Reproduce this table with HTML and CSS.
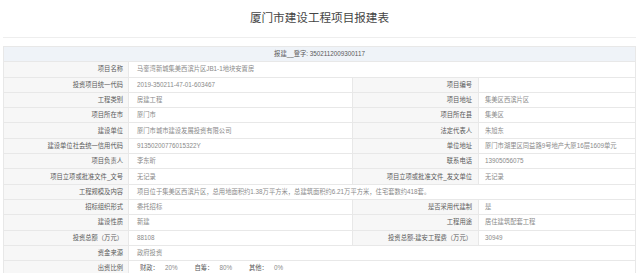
FILE: index.html
```html
<!DOCTYPE html>
<html lang="zh-CN">
<head>
<meta charset="utf-8">
<title>厦门市建设工程项目报建表</title>
<link rel="stylesheet" href="styles.css">
</head>
<body>
<div class="page">
  <h1 class="title">厦门市建设工程项目报建表</h1>
  <div class="rule"></div>
  <table class="form">
    <colgroup>
      <col class="c-label1"><col class="c-val1"><col class="c-label2"><col class="c-val2">
    </colgroup>
    <tr class="head"><td colspan="4">报建__登字: 3502112009300117</td></tr>
    <tr><th>项目名称</th><td colspan="3">马銮湾新城集美西滨片区JB1-1地块安置房</td></tr>
    <tr><th>投资项目统一代码</th><td>2019-350211-47-01-603467</td><th>项目编号</th><td></td></tr>
    <tr><th>工程类别</th><td>房建工程</td><th>项目地址</th><td>集美区西滨片区</td></tr>
    <tr><th>项目所在市</th><td>厦门市</td><th>项目所在县</th><td>集美区</td></tr>
    <tr><th>建设单位</th><td>厦门市城市建设发展投资有限公司</td><th>法定代表人</th><td>朱旭东</td></tr>
    <tr><th>建设单位社会统一信用代码</th><td>91350200776015322Y</td><th>单位地址</th><td>厦门市湖里区同益路9号地产大厦16层1609单元</td></tr>
    <tr><th>项目负责人</th><td>李东昕</td><th>联系电话</th><td>13905056075</td></tr>
    <tr><th>项目立项或批准文件_文号</th><td>无记录</td><th>项目立项或批准文件_发文单位</th><td>无记录</td></tr>
    <tr><th>工程规模及内容</th><td colspan="3">项目位于集美区西滨片区，总用地面积约1.38万平方米，总建筑面积约6.21万平方米，住宅套数约418套。</td></tr>
    <tr><th>招标组织形式</th><td>委托招标</td><th>是否采用代建制</th><td>是</td></tr>
    <tr><th>建设性质</th><td>新建</td><th>工程用途</th><td>居住建筑配套工程</td></tr>
    <tr><th>投资总额（万元）</th><td>88108</td><th>投资总额-建安工程费（万元）</th><td>30949</td></tr>
    <tr><th>资金来源</th><td colspan="3">政府投资</td></tr>
    <tr><th>出资比例</th><td colspan="3"><span class="k">财政：</span><span class="v">20%</span><span class="k">自筹：</span><span class="v">80%</span><span class="k">其他：</span><span class="v">0%</span></td></tr>
  </table>
</div>
</body>
</html>
```
FILE: styles.css
```css
html, body {
  margin: 0;
  padding: 0;
  background: #fff;
}
body {
  font-family: "Liberation Sans", "Noto Sans CJK SC", sans-serif;
  color: #333;
}
.page {
  padding: 0 4px 0 3px;
}
.title {
  margin: 0;
  padding-top: 10px;
  height: 27px;
  font-family: "Noto Sans CJK SC", sans-serif;
  font-weight: normal;
  font-size: 11.6px;
  line-height: 14px;
  text-align: center;
  color: #444;
}
.rule {
  height: 1px;
  background: #eeeeee;
  margin-bottom: 8px;
}
.form {
  width: 100%;
  border-collapse: collapse;
  table-layout: fixed;
  font-size: 6.3px;
  border-right: 1px solid #dcdcdc;
}
.c-label1 { width: 125px; }
.c-val1 { width: 224px; }
.c-label2 { width: 126px; }
.c-val2 { width: auto; }
.form th, .form td {
  border: 1px solid #e8e8e8;
  height: 14.3px;
  padding: 0;
  line-height: 8px;
  white-space: nowrap;
  overflow: hidden;
}
.form th {
  font-weight: normal;
  text-align: right;
  padding-right: 5px;
  background: #f7f7f7;
  color: #5a5a5a;
}
.form td {
  text-align: left;
  padding-left: 8px;
  color: #8a8a8a;
  background: #fff;
}
.form th + td + th {
  padding-right: 6px;
}
.form th + td + th + td {
  padding-left: 6px;
}
.form tr.head td {
  background: #eff3f8;
  text-align: center;
  padding-left: 0;
  color: #5a5a5a;
}
.k {
  color: #5a5a5a;
  margin-left: 3px;
}
.v {
  color: #8a8a8a;
  margin-left: 6px;
  margin-right: 14px;
}
```
